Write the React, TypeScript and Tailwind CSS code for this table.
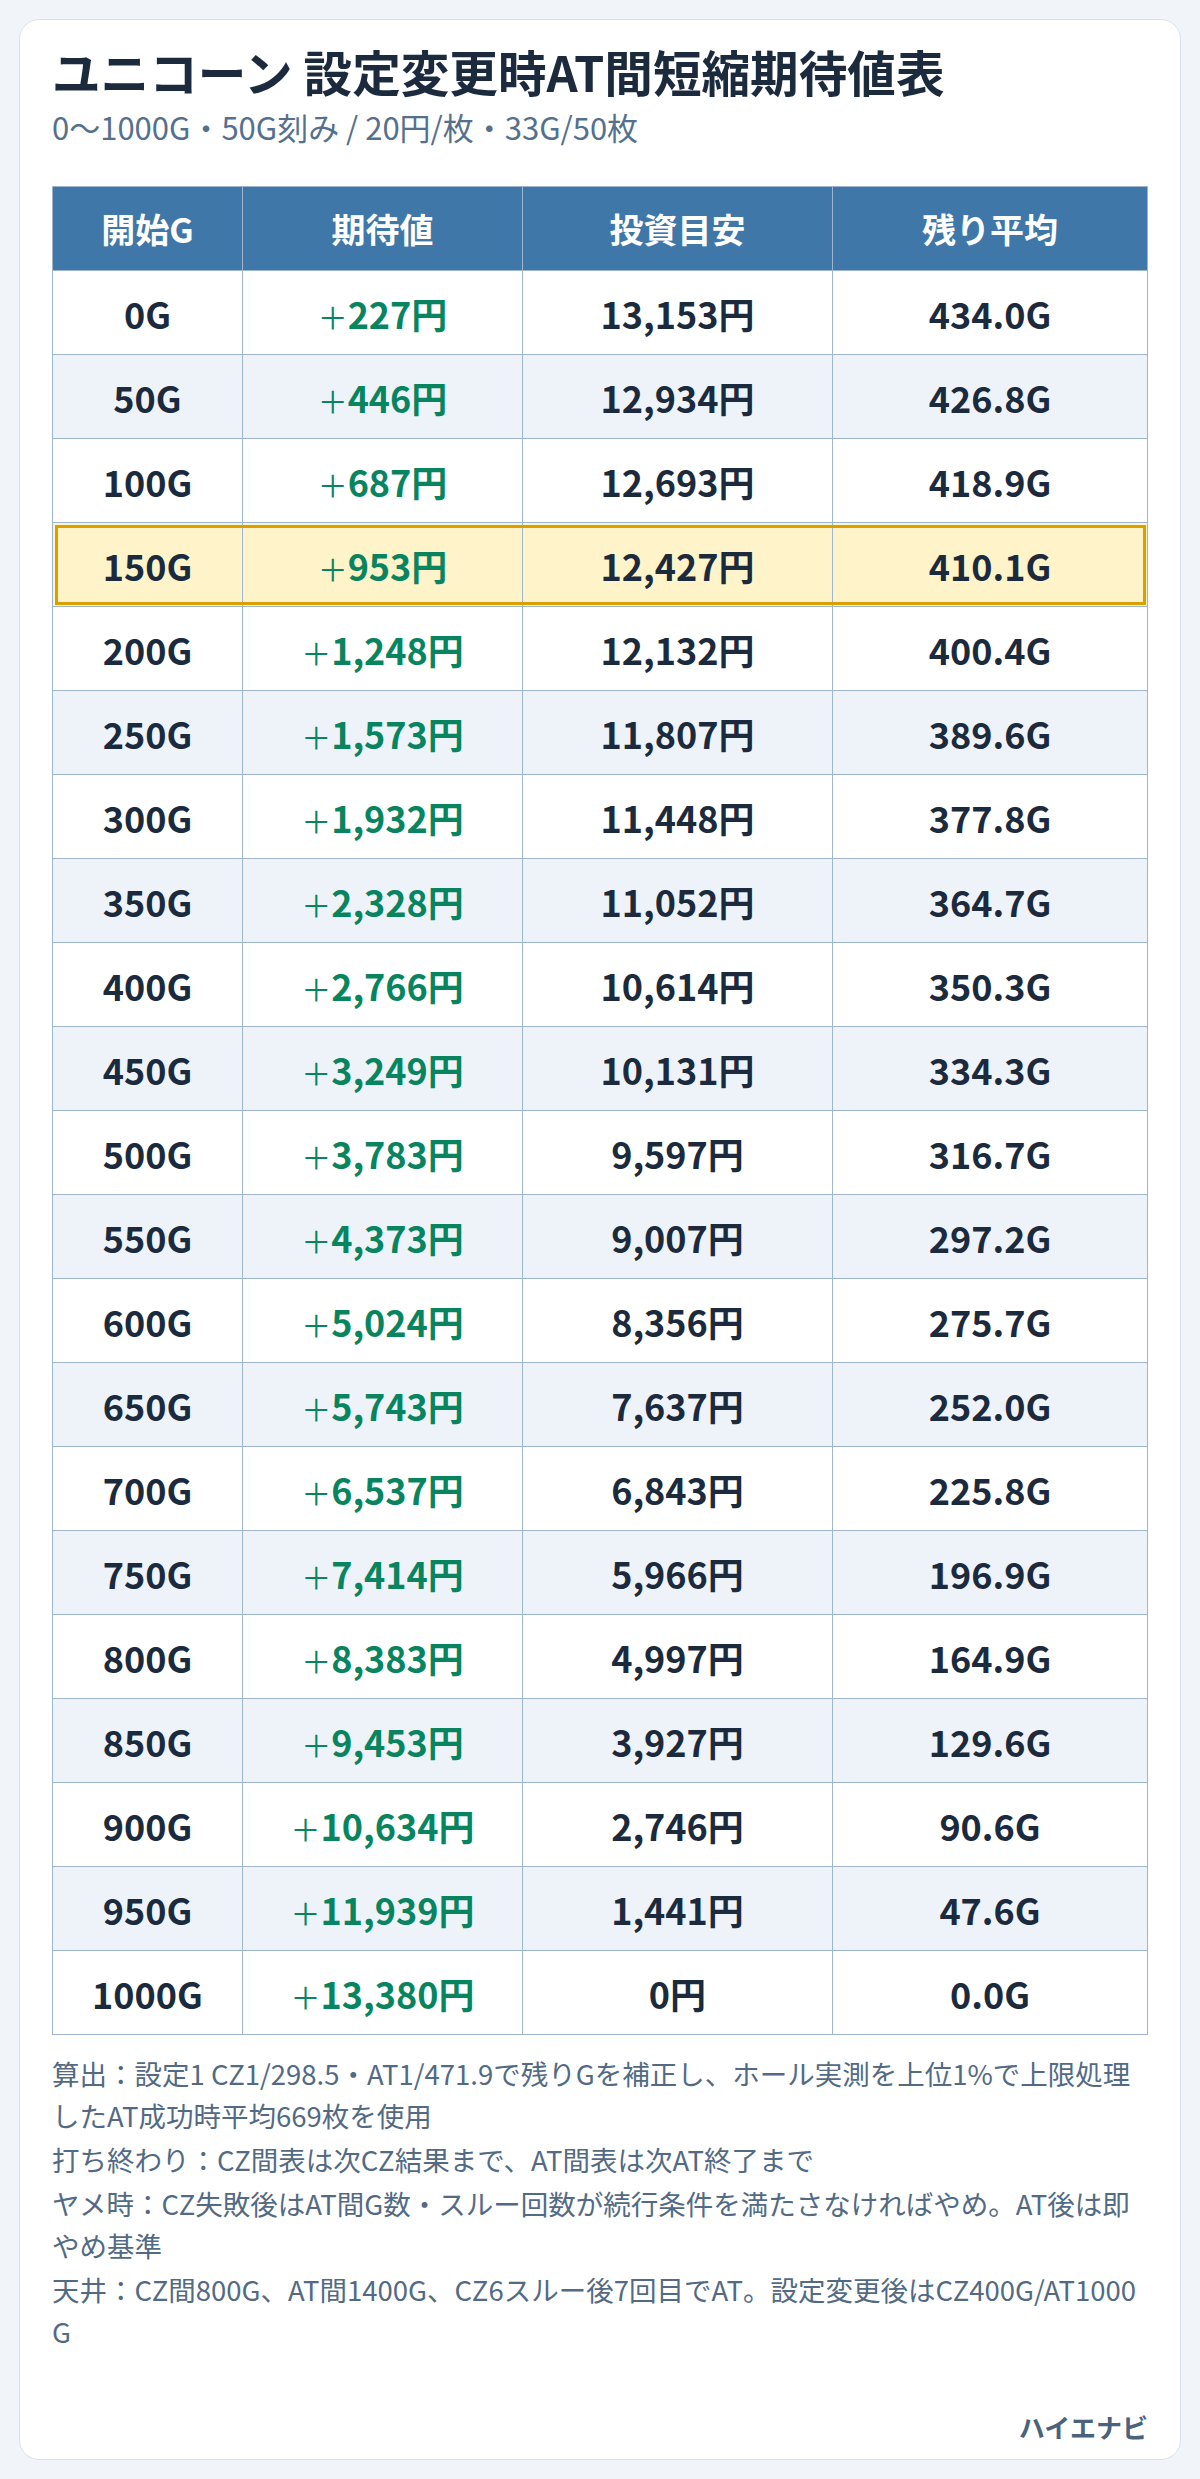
import React from "react";

type Row = { g: string; ev: string; inv: string; rem: string };

const rows: Row[] = [
  { g: "0G", ev: "227", inv: "13,153", rem: "434.0G" },
  { g: "50G", ev: "446", inv: "12,934", rem: "426.8G" },
  { g: "100G", ev: "687", inv: "12,693", rem: "418.9G" },
  { g: "150G", ev: "953", inv: "12,427", rem: "410.1G" },
  { g: "200G", ev: "1,248", inv: "12,132", rem: "400.4G" },
  { g: "250G", ev: "1,573", inv: "11,807", rem: "389.6G" },
  { g: "300G", ev: "1,932", inv: "11,448", rem: "377.8G" },
  { g: "350G", ev: "2,328", inv: "11,052", rem: "364.7G" },
  { g: "400G", ev: "2,766", inv: "10,614", rem: "350.3G" },
  { g: "450G", ev: "3,249", inv: "10,131", rem: "334.3G" },
  { g: "500G", ev: "3,783", inv: "9,597", rem: "316.7G" },
  { g: "550G", ev: "4,373", inv: "9,007", rem: "297.2G" },
  { g: "600G", ev: "5,024", inv: "8,356", rem: "275.7G" },
  { g: "650G", ev: "5,743", inv: "7,637", rem: "252.0G" },
  { g: "700G", ev: "6,537", inv: "6,843", rem: "225.8G" },
  { g: "750G", ev: "7,414", inv: "5,966", rem: "196.9G" },
  { g: "800G", ev: "8,383", inv: "4,997", rem: "164.9G" },
  { g: "850G", ev: "9,453", inv: "3,927", rem: "129.6G" },
  { g: "900G", ev: "10,634", inv: "2,746", rem: "90.6G" },
  { g: "950G", ev: "11,939", inv: "1,441", rem: "47.6G" },
  { g: "1000G", ev: "13,380", inv: "0", rem: "0.0G" },
];

const cell =
  "h-[84px] flex items-center justify-center border-r border-b border-[#9db5cd]";

export default function App() {
  return (
    <div className="min-h-[2479px] bg-[#f1f5f9] px-[19px] py-[19px] font-['Noto_Sans_CJK_JP',sans-serif]">
      <div className="bg-white border border-[#d9e2ec] rounded-[20px] px-[32px] pt-[22px] pb-[14px]">
        <h1 className="text-[48.6px] leading-[58px] font-bold text-[#1b2a3d]">
          ユニコーン 設定変更時AT間短縮期待値表
        </h1>
        <p className="mt-[5px] text-[31px] leading-[44px] text-[#55708d]">
          0〜1000G・50G刻み / 20円/枚・33G/50枚
        </p>

        <div className="mt-[37px] border-l border-t border-[#9db5cd]">
          <div className="grid grid-cols-[190px_280px_310px_315px] bg-[#3f77a8] text-white text-[34px] font-bold">
            <div className={cell}>開始G</div>
            <div className={cell}>期待値</div>
            <div className={cell}>投資目安</div>
            <div className={cell}>残り平均</div>
          </div>
          {rows.map((r, i) => {
            const hl = r.g === "150G";
            const bg = hl ? "bg-[#fef3c9]" : i % 2 === 1 ? "bg-[#eef3fa]" : "bg-white";
            return (
              <div
                key={r.g}
                className={
                  "grid grid-cols-[190px_280px_310px_315px] text-[36px] font-bold text-[#1b2a3d] " +
                  bg +
                  (hl ? " outline-[3px] outline-solid outline-[#d9a000] outline-offset-[-5px]" : "")
                }
              >
                <div className={cell}>{r.g}</div>
                <div className={cell + " text-[#08855f]"}>
                  <span>
                    <span className="text-[30px] font-normal">＋</span>
                    {r.ev}円
                  </span>
                </div>
                <div className={cell}>{r.inv}円</div>
                <div className={cell}>{r.rem}</div>
              </div>
            );
          })}
        </div>

        <div className="mt-[17px] text-[27.5px] leading-[42px] text-[#526a84] break-all flex flex-col gap-[2px]">
          <p>
            算出：設定1 CZ1/298.5・AT1/471.9で残りGを補正し、ホール実測を上位1%で上限処理したAT成功時平均669枚を使用
          </p>
          <p>打ち終わり：CZ間表は次CZ結果まで、AT間表は次AT終了まで</p>
          <p>
            ヤメ時：CZ失敗後はAT間G数・スルー回数が続行条件を満たさなければやめ。AT後は即やめ基準
          </p>
          <p>
            天井：CZ間800G、AT間1400G、CZ6スルー後7回目でAT。設定変更後はCZ400G/AT1000G
          </p>
        </div>

        <div className="mt-[57px] text-right text-[26px] leading-[36px] font-bold text-[#4a627d]">
          ハイエナビ
        </div>
      </div>
    </div>
  );
}
